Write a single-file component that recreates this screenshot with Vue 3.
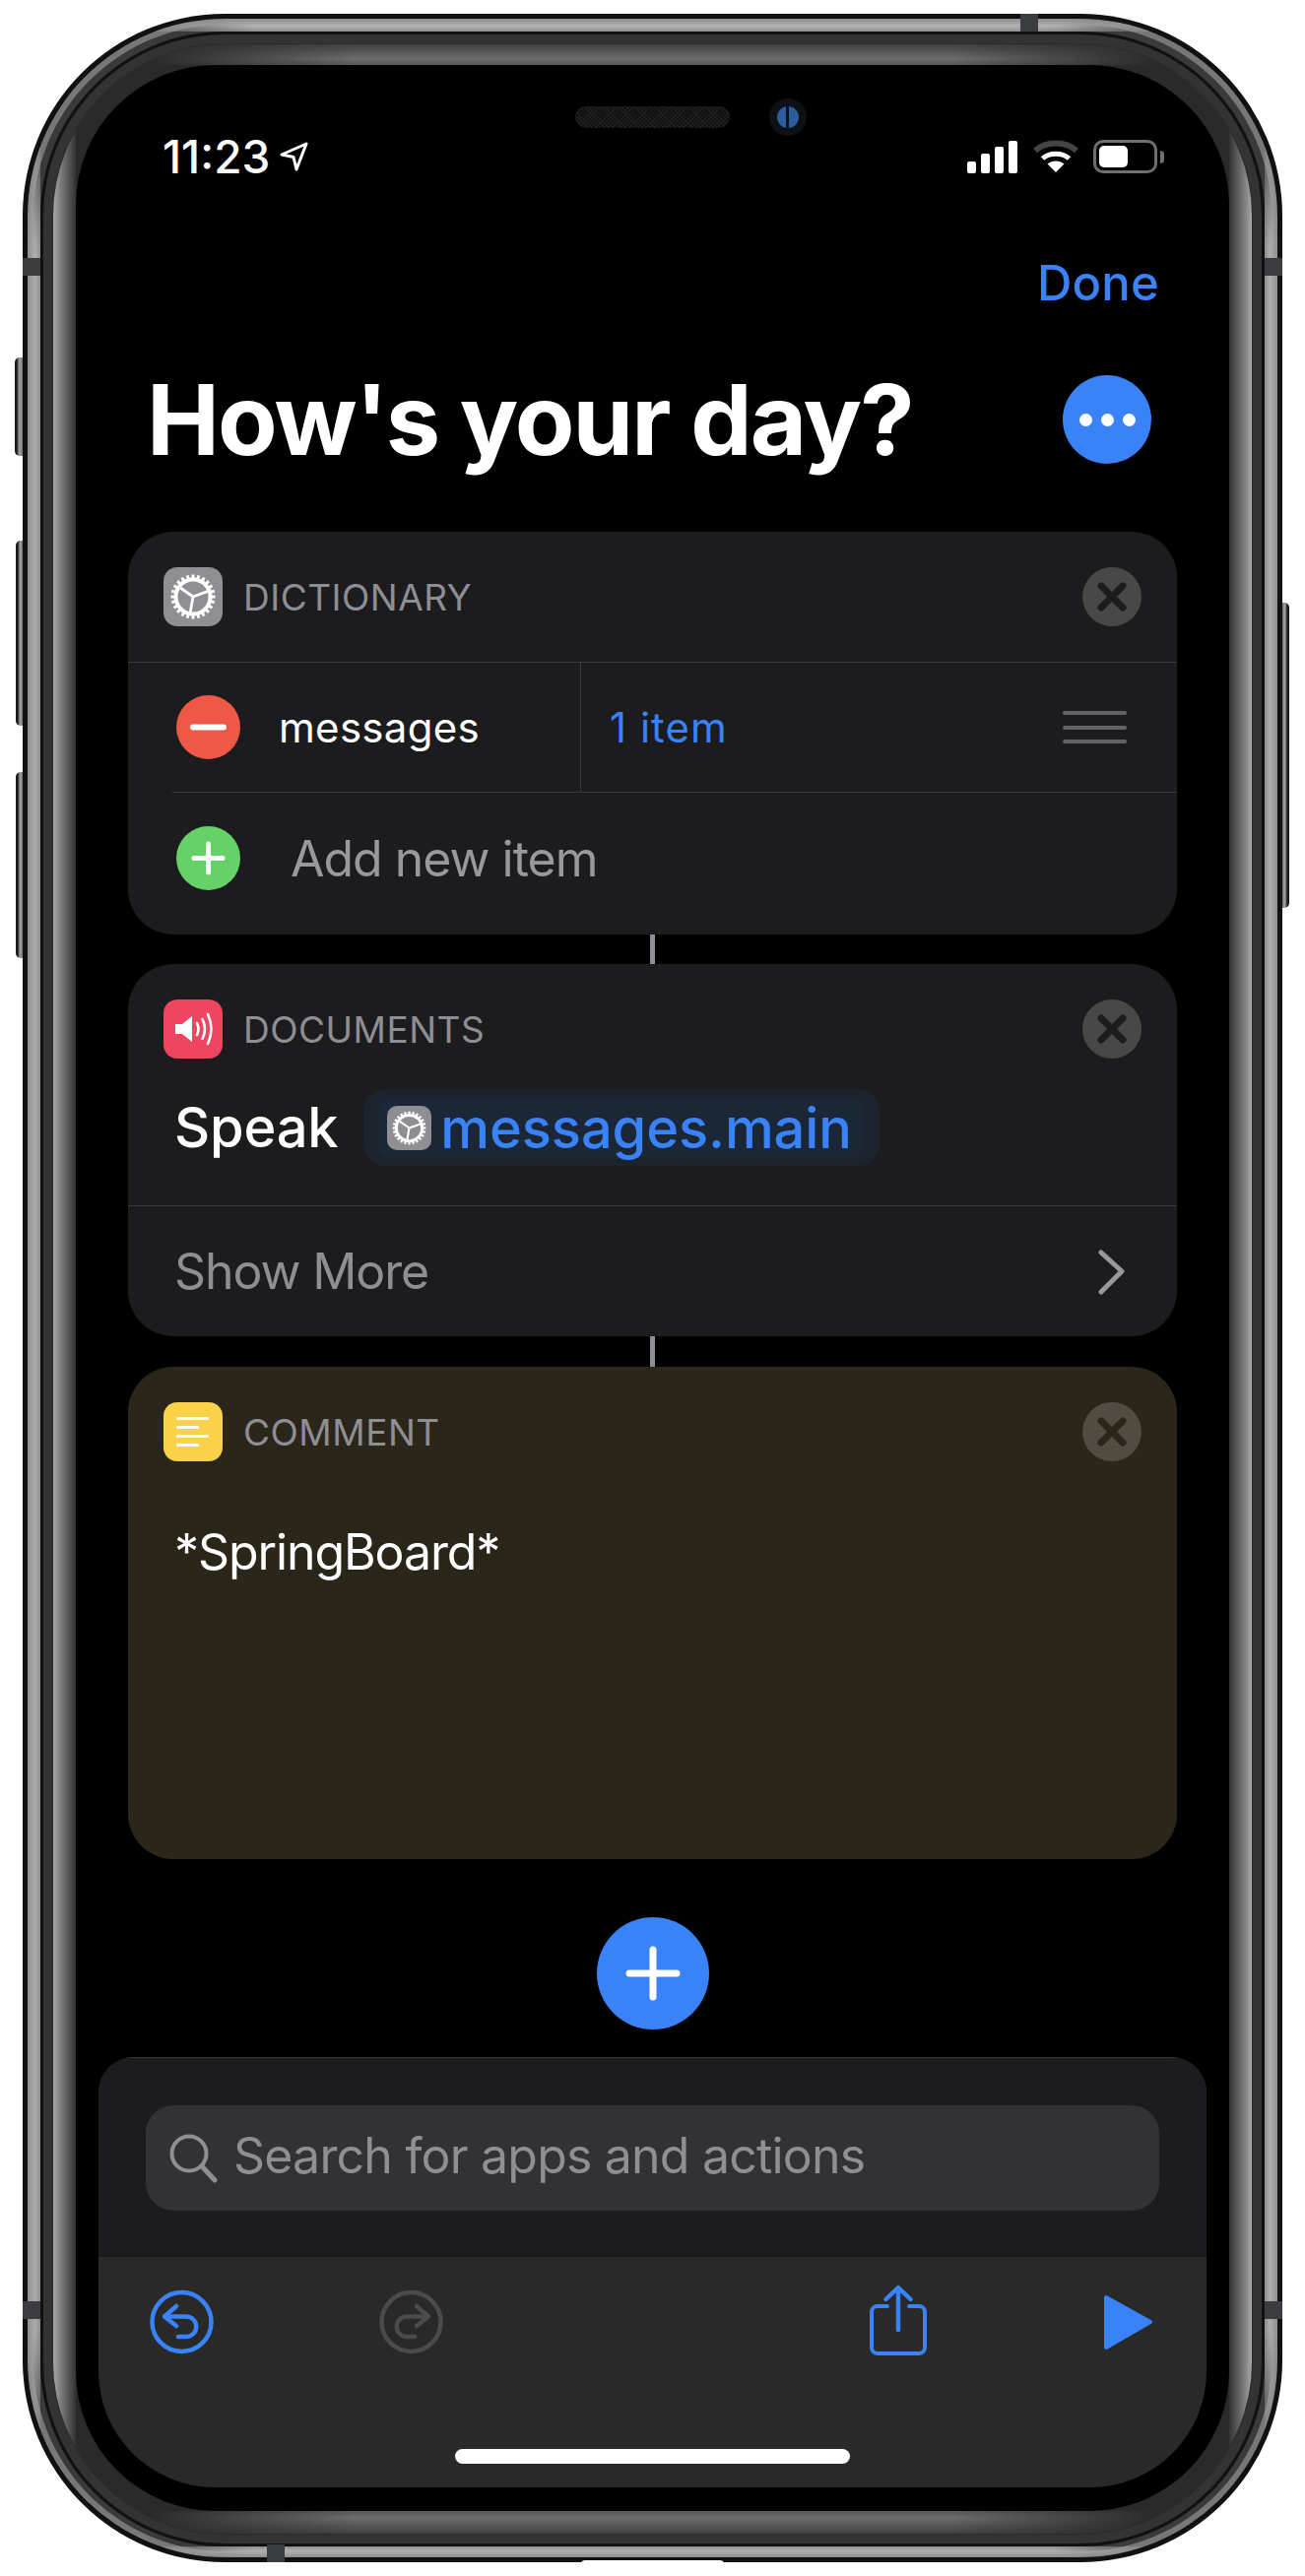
<script setup>
const handleLines = [1, 2, 3]
const commentLines = [33, 23, 33, 23]
const teeth = Array.from({ length: 24 }, (_, i) => i * 15)
const spokes = [70, 190, 305]
</script>

<template>
  <div class="page">
    <div class="device">
      <i class="side-btn silent"></i>
      <i class="side-btn vol-up"></i>
      <i class="side-btn vol-down"></i>
      <i class="side-btn power"></i>
      <i class="port"></i>
      <i class="antenna a-top"></i>
      <i class="antenna a-lt"></i>
      <i class="antenna a-rt"></i>
      <i class="antenna a-lb"></i>
      <i class="antenna a-rb"></i>
      <i class="antenna a-bottom"></i>
      <div class="ring-light">
        <div class="ring-dark">
          <div class="ring-inner">
            <main class="screen">
              <i class="speaker"></i>
              <i class="camera"><b></b></i>

              <div class="status">
                <span class="time">11:23</span>
                <svg class="loc" width="30" height="30" viewBox="0 0 30 30">
                  <path d="M28 2 L3 13 L15 15.5 L18 28 Z" fill="none" stroke="#fff" stroke-width="3" stroke-linejoin="round" />
                </svg>
                <span class="status-space"></span>
                <div class="signal">
                  <i class="b1"></i><i class="b2"></i><i class="b3"></i><i class="b4"></i>
                </div>
                <svg class="wifi" width="46" height="34" viewBox="0 0 46 34">
                  <path d="M2 11 C13 1 33 1 44 11" fill="none" stroke="#444" stroke-width="6" />
                  <path d="M9.5 19 C16 12.5 30 12.5 36.5 19" fill="none" stroke="#fff" stroke-width="5" />
                  <path d="M23 33 L14.5 24.5 C19 20.5 27 20.5 31.5 24.5 Z" fill="#fff" />
                </svg>
                <div class="battery"><i></i></div>
                <i class="nub"></i>
              </div>

              <div class="done-row"><span class="done">Done</span></div>

              <div class="title-row">
                <h1 class="title">How's your day?</h1>
                <div class="more"><i></i><i></i><i></i></div>
              </div>

              <svg class="defs" width="0" height="0">
                <defs>
                  <symbol id="gear" viewBox="0 0 60 60">
                    <circle cx="30" cy="30" r="17.5" fill="none" stroke="#fff" stroke-width="4" />
                    <g stroke="#fff" stroke-width="3">
                      <line v-for="a in teeth" :key="a" x1="30" y1="7.5" x2="30" y2="13" :transform="`rotate(${a} 30 30)`" />
                    </g>
                    <g stroke="#fff" stroke-width="2.8">
                      <line v-for="a in spokes" :key="a" x1="30" y1="30" x2="30" y2="13" :transform="`rotate(${a} 30 30)`" />
                    </g>
                  </symbol>
                </defs>
              </svg>

              <section class="card dict">
                <header class="card-head with-line">
                  <span class="app-icon gray"><svg width="60" height="60"><use href="#gear" /></svg></span>
                  <span class="label">DICTIONARY</span>
                  <svg class="close" width="60" height="60" viewBox="0 0 60 60">
                    <circle cx="30" cy="30" r="30" fill="#484848" />
                    <path d="M19 19 L41 41 M41 19 L19 41" stroke="#1c1c1e" stroke-width="7" stroke-linecap="round" />
                  </svg>
                </header>
                <div class="row-item">
                  <div class="key-cell">
                    <svg class="round" width="65" height="65" viewBox="0 0 65 65">
                      <circle cx="32.5" cy="32.5" r="32.5" fill="#ef5747" />
                      <path d="M17 32.5 H48" stroke="#fff" stroke-width="6" stroke-linecap="round" />
                    </svg>
                    <span class="key">messages</span>
                  </div>
                  <div class="value-cell">
                    <span class="value">1 item</span>
                    <div class="handle"><i v-for="n in handleLines" :key="n"></i></div>
                  </div>
                </div>
                <div class="row-add">
                  <svg class="round" width="65" height="65" viewBox="0 0 65 65">
                    <circle cx="32.5" cy="32.5" r="32.5" fill="#65d168" />
                    <path d="M18 32.5 H47 M32.5 18 V47" stroke="#fff" stroke-width="5" stroke-linecap="round" />
                  </svg>
                  <span class="add-text">Add new item</span>
                </div>
              </section>

              <i class="link l30"></i>

              <section class="card docs">
                <header class="card-head">
                  <span class="app-icon red">
                    <svg width="60" height="60" viewBox="0 0 60 60">
                      <path d="M12 25 H19 L29 17 V43 L19 35 H12 Z" fill="#fff" />
                      <path d="M34 24 Q37 30 34 36 M39.5 20 Q44.5 30 39.5 40 M45 15 Q52 30 45 45" fill="none" stroke="#fff" stroke-width="2.6" stroke-linecap="round" />
                    </svg>
                  </span>
                  <span class="label">DOCUMENTS</span>
                  <svg class="close" width="60" height="60" viewBox="0 0 60 60">
                    <circle cx="30" cy="30" r="30" fill="#484848" />
                    <path d="M19 19 L41 41 M41 19 L19 41" stroke="#1c1c1e" stroke-width="7" stroke-linecap="round" />
                  </svg>
                </header>
                <div class="speak-row">
                  <span class="speak">Speak</span>
                  <div class="token-outer">
                    <div class="token">
                      <span class="token-icon"><svg width="45" height="45"><use href="#gear" /></svg></span>
                      <span class="token-text">messages.main</span>
                    </div>
                  </div>
                </div>
                <div class="show-more">
                  <span class="show-text">Show More</span>
                  <svg width="30" height="50" viewBox="0 0 30 50">
                    <path d="M4 6 L25 25 L4 46" fill="none" stroke="#98989d" stroke-width="5" stroke-linecap="round" stroke-linejoin="round" />
                  </svg>
                </div>
              </section>

              <i class="link l31"></i>

              <section class="card comment">
                <header class="card-head">
                  <span class="app-icon yellow">
                    <i v-for="(w, n) in commentLines" :key="n" class="cline" :style="{ width: w + 'px' }"></i>
                  </span>
                  <span class="label">COMMENT</span>
                  <svg class="close" width="60" height="60" viewBox="0 0 60 60">
                    <circle cx="30" cy="30" r="30" fill="#514c42" />
                    <path d="M19 19 L41 41 M41 19 L19 41" stroke="#2b2619" stroke-width="7" stroke-linecap="round" />
                  </svg>
                </header>
                <p class="comment-text">*SpringBoard*</p>
              </section>

              <div class="add-btn">
                <svg width="114" height="114" viewBox="0 0 114 114">
                  <circle cx="57" cy="57" r="57" fill="#3a82f7" />
                  <path d="M33 57 H81 M57 33 V81" stroke="#fff" stroke-width="7" stroke-linecap="round" />
                </svg>
              </div>

              <div class="sheet">
                <div class="sheet-top">
                  <div class="search">
                    <svg width="50" height="50" viewBox="0 0 50 50">
                      <circle cx="20" cy="20" r="17.5" fill="none" stroke="#8e8e93" stroke-width="4" />
                      <path d="M33 33 L46 47" stroke="#8e8e93" stroke-width="5" stroke-linecap="round" />
                    </svg>
                    <span class="search-text">Search for apps and actions</span>
                  </div>
                </div>
                <div class="sheet-bottom">
                  <div class="tools">
                    <svg class="tool" width="65" height="72" viewBox="0 0 65 72">
                      <circle cx="32.5" cy="38" r="30" fill="none" stroke="#3a82f7" stroke-width="4.5" />
                      <path d="M27 22 L15 32.5 L27 42 M15 32.5 H37 a10.2 10.2 0 0 1 0 20.5 H29" fill="none" stroke="#3a82f7" stroke-width="4.5" stroke-linecap="round" stroke-linejoin="round" />
                    </svg>
                    <svg class="tool redo" width="65" height="72" viewBox="0 0 65 72">
                      <circle cx="32.5" cy="38" r="30" fill="none" stroke="#4b4b4d" stroke-width="4.5" />
                      <path d="M38 22 L50 32.5 L38 42 M50 32.5 H28 a10.2 10.2 0 0 0 0 20.5 H36" fill="none" stroke="#4b4b4d" stroke-width="4.5" stroke-linecap="round" stroke-linejoin="round" />
                    </svg>
                    <span class="tools-space"></span>
                    <svg class="tool" width="58" height="72" viewBox="0 0 58 72">
                      <path d="M18 22 H8 a6 6 0 0 0 -6 6 V64 a6 6 0 0 0 6 6 H50 a6 6 0 0 0 6 -6 V28 a6 6 0 0 0 -6 -6 H40" fill="none" stroke="#3a82f7" stroke-width="4" stroke-linecap="round" />
                      <path d="M29 3 V46 M16.5 15 L29 3 L41.5 15" fill="none" stroke="#3a82f7" stroke-width="4.5" stroke-linecap="round" stroke-linejoin="round" />
                    </svg>
                    <svg class="tool play" width="50" height="72" viewBox="0 0 50 72">
                      <path d="M2 13 L47 38 L2 64 Z" fill="#3a82f7" stroke="#3a82f7" stroke-width="4" stroke-linejoin="round" />
                    </svg>
                  </div>
                  <i class="home"></i>
                </div>
              </div>
            </main>
          </div>
        </div>
      </div>
    </div>
  </div>
</template>

<style>
html, body { background: #fff; margin: 0; }
</style>

<style scoped>
* { box-sizing: border-box; }
i { display: block; font-style: normal; }

.page {
  width: 1325px;
  height: 2616px;
  padding: 14px 23px;
  background: #fff;
  font-family: Inter, "Liberation Sans", sans-serif;
  overflow: hidden;
}
.device {
  position: relative;
  width: 1279px;
  height: 2588px;
  padding: 5px;
  border-radius: 205px;
  background: #111;
}
.ring-light {
  height: 100%;
  padding: 13px 13px 11px;
  border-radius: 200px;
  background-color: #3a3a3a;
  background-repeat: no-repeat;
  background-image:
    linear-gradient(90deg, #3a3a3a 6%, rgba(58,58,58,0) 18%, rgba(58,58,58,0) 82%, #3a3a3a 94%),
    linear-gradient(180deg, #6f6f6f, #b4b4b4 55%, #8e8e8e),
    linear-gradient(90deg, #3a3a3a 6%, rgba(58,58,58,0) 18%, rgba(58,58,58,0) 82%, #3a3a3a 94%),
    linear-gradient(0deg, #6f6f6f, #b4b4b4 55%, #8e8e8e),
    linear-gradient(180deg, #3a3a3a 3%, rgba(58,58,58,0) 9%, rgba(58,58,58,0) 91%, #3a3a3a 97%),
    linear-gradient(90deg, #6f6f6f, #b0b0b0 55%, #8e8e8e),
    linear-gradient(180deg, #3a3a3a 3%, rgba(58,58,58,0) 9%, rgba(58,58,58,0) 91%, #3a3a3a 97%),
    linear-gradient(270deg, #6f6f6f, #b0b0b0 55%, #8e8e8e);
  background-size: 100% 13px, 100% 13px, 100% 11px, 100% 11px, 13px 100%, 13px 100%, 13px 100%, 13px 100%;
  background-position: top, top, bottom, bottom, left, left, right, right;
  box-shadow: inset 0 0 0 6px rgba(170,170,170,0.55);
}
.ring-dark {
  height: 100%;
  padding: 13px;
  border-radius: 187px;
  background: #2b2b2c;
  box-shadow: inset 0 0 0 3px #111, inset 0 0 0 12px #333;
}
.ring-inner {
  height: 100%;
  padding: 21px 23px 23px;
  border-radius: 174px;
  background-color: #2a2a2a;
  background-repeat: no-repeat;
  background-image:
    linear-gradient(90deg, #2a2a2a 8%, rgba(42,42,42,0) 25%, rgba(42,42,42,0) 75%, #2a2a2a 92%),
    linear-gradient(180deg, #414141, #6c6c6c 70%, #585858),
    linear-gradient(90deg, #2a2a2a 8%, rgba(42,42,42,0) 25%, rgba(42,42,42,0) 75%, #2a2a2a 92%),
    linear-gradient(0deg, #414141, #6c6c6c 70%, #585858),
    linear-gradient(90deg, #a9a9a9, #7a7a7a 35%, #333 100%),
    linear-gradient(270deg, #a9a9a9, #7a7a7a 35%, #333 100%);
  background-size: 100% 21px, 100% 21px, 100% 23px, 100% 23px, 23px 100%, 23px 100%;
  background-position: top, top, bottom, bottom, left, right;
}
.screen {
  position: relative;
  height: 100%;
  padding-top: 60px;
  border-radius: 142px;
  background: #000;
  display: flex;
  flex-direction: column;
  overflow: hidden;
}

.antenna { position: absolute; background: #3a3c40; z-index: 2; }
.a-top { left: 1013px; top: 0; width: 18px; height: 18px; }
.a-bottom { left: 248px; bottom: 0; width: 18px; height: 18px; }
.a-lt { left: 0; top: 248px; width: 18px; height: 18px; }
.a-rt { right: 0; top: 248px; width: 18px; height: 18px; }
.a-lb { left: 0; top: 2323px; width: 18px; height: 18px; }
.a-rb { right: 0; top: 2323px; width: 18px; height: 18px; }

.side-btn {
  position: absolute;
  border-radius: 5px 0 0 5px;
  background: linear-gradient(90deg, #1a1a1a 0 2px, #555 3px, #a3a3a3 60%, #777 100%);
}
.silent { left: -8px; top: 349px; width: 8px; height: 100px; }
.vol-up { left: -7px; top: 535px; width: 7px; height: 188px; }
.vol-down { left: -7px; top: 770px; width: 7px; height: 189px; }
.power { right: -7px; top: 598px; width: 7px; height: 310px; transform: scaleX(-1); }
.port {
  position: absolute;
  left: 567px;
  bottom: -2px;
  width: 145px;
  height: 4px;
  background: #fff;
  border-radius: 6px 6px 0 0;
  z-index: 3;
}

.speaker {
  position: absolute;
  left: 507px;
  top: 42px;
  width: 157px;
  height: 22px;
  border-radius: 11px;
  background-color: #0f0f0f;
  background-image:
    repeating-linear-gradient(45deg, #1f1f1f 0 1px, transparent 1px 3px),
    repeating-linear-gradient(-45deg, #1f1f1f 0 1px, transparent 1px 3px);
}
.camera {
  position: absolute;
  left: 704px;
  top: 34px;
  width: 38px;
  height: 38px;
  border-radius: 50%;
  background: #0d1014;
  display: flex;
  align-items: center;
  justify-content: center;
}
.camera b {
  display: block;
  width: 22px;
  height: 22px;
  border-radius: 50%;
  background: linear-gradient(90deg, #2a5d9c 0 42%, #0b1118 42% 56%, #2a5d9c 56%);
}

.status {
  display: flex;
  align-items: center;
  height: 66px;
  padding: 0 66px 0 88px;
  color: #fff;
}
.time {
  font-size: 46px;
  font-weight: 500;
  line-height: 66px;
}
.loc { margin-left: 9px; }
.status-space { flex: 1; }
.signal { display: flex; align-items: flex-end; gap: 5px; height: 33px; }
.signal i { width: 9px; border-radius: 2px; background: #fff; }
.b1 { height: 12px; }
.b2 { height: 20px; }
.b3 { height: 27px; }
.b4 { height: 33px; }
.wifi { margin-left: 16px; }
.battery {
  margin-left: 15px;
  width: 65px;
  height: 34px;
  padding: 3px;
  border: 3px solid #6f6f6f;
  border-radius: 10px;
}
.battery i { width: 29px; height: 22px; border-radius: 5px; background: #fff; }
.nub { width: 4px; height: 13px; margin-left: 3px; border-radius: 0 4px 4px 0; background: #6f6f6f; }

.done-row {
  display: flex;
  justify-content: flex-end;
  height: 60px;
  margin-top: 66px;
  padding-right: 71px;
}
.done {
  color: #3a82f7;
  font-size: 49px;
  font-weight: 500;
  letter-spacing: 0.2px;
  line-height: 60px;
}
.title-row {
  display: flex;
  align-items: center;
  justify-content: space-between;
  height: 90px;
  margin-top: 63px;
  padding: 0 79px 0 72px;
}
.title {
  margin: 0;
  color: #fff;
  font-size: 99px;
  font-weight: 700;
  letter-spacing: -1.9px;
  line-height: 90px;
  white-space: nowrap;
}
.more {
  width: 90px;
  height: 90px;
  border-radius: 50%;
  background: #3a82f7;
  display: flex;
  align-items: center;
  justify-content: center;
  gap: 9px;
}
.more i { width: 13px; height: 13px; border-radius: 50%; background: #fff; }
.defs { position: absolute; }

.card {
  flex: none;
  margin: 0 53px;
  border-radius: 46px;
  background: #1c1c1e;
  overflow: hidden;
}
.dict { margin-top: 69px; height: 409px; }
.docs { height: 378px; }
.comment { height: 500px; background: #2b261a; }
.link { flex: none; width: 5px; margin-left: 583px; background: #8e8e93; }
.l30 { height: 30px; }
.l31 { height: 31px; }

.card-head {
  display: flex;
  align-items: center;
  height: 132px;
  padding: 0 35px 0 36px;
}
.with-line { height: 133px; border-bottom: 1px solid #3a3a3c; }
.app-icon {
  flex: none;
  width: 60px;
  height: 60px;
  border-radius: 14px;
  display: flex;
  flex-direction: column;
  align-items: flex-start;
  justify-content: center;
}
.gray { background: #8e8e93; }
.red { background: #ee4660; }
.yellow { background: #f9d24a; padding-left: 13px; gap: 6px; }
.cline { height: 3px; border-radius: 2px; background: #fff; }
.label {
  flex: 1;
  margin-left: 21px;
  padding-top: 2px;
  color: #8e8e93;
  font-size: 37px;
  letter-spacing: 0.5px;
  line-height: 60px;
  font-weight: 400;
}
.close { flex: none; margin-right: 1px; }

.row-item { display: flex; height: 131px; }
.key-cell {
  display: flex;
  align-items: center;
  width: 460px;
  padding-left: 49px;
  border-right: 1px solid #3a3a3c;
}
.key {
  margin-left: 39px;
  color: #fff;
  font-size: 42px;
  letter-spacing: 0.3px;
}
.value-cell {
  flex: 1;
  display: flex;
  align-items: center;
  justify-content: space-between;
  padding: 0 51px 0 29px;
}
.value { color: #3a82f7; font-size: 42px; letter-spacing: 1px; }
.handle { display: flex; flex-direction: column; gap: 10.5px; width: 65px; }
.handle i { height: 4px; border-radius: 2px; background: #636366; }
.row-add {
  position: relative;
  display: flex;
  align-items: center;
  height: 145px;
  padding: 0 0 10px 49px;
}
.row-add::before {
  content: "";
  position: absolute;
  top: 0;
  left: 45px;
  right: 0;
  height: 1px;
  background: #3a3a3c;
}
.add-text {
  margin-left: 51px;
  color: #98989d;
  font-size: 50px;
  letter-spacing: -1px;
}
.speak-row {
  display: flex;
  align-items: center;
  height: 114px;
  padding-left: 47px;
  border-bottom: 1px solid #3a3a3c;
  padding-bottom: 45px;
}
.speak {
  color: #fff;
  font-size: 56px;
  font-weight: 500;
  letter-spacing: -0.2px;
}
.token-outer {
  margin-left: 26px;
  padding: 8px 16px 7px 15px;
  border-radius: 22px;
  background: #1d232d;
}
.token {
  display: flex;
  align-items: center;
  gap: 9px;
  height: 63px;
  padding: 0 12px 0 9px;
  border-radius: 16px;
  background: #1b2637;
}
.token-icon {
  width: 45px;
  height: 45px;
  border-radius: 10px;
  background: #8e8e93;
  display: flex;
}
.token-text {
  color: #3a82f7;
  font-size: 56px;
  letter-spacing: -0.1px;
  white-space: nowrap;
  font-weight: 500;
}
.show-more {
  display: flex;
  align-items: center;
  justify-content: space-between;
  height: 132px;
  padding: 0 51px 0 47px;
}
.show-text { color: #8e8e93; font-size: 50px; letter-spacing: -1.1px; }
.comment-text {
  margin: 26px 0 0 47px;
  color: #fff;
  font-size: 50px;
  line-height: 60px;
  letter-spacing: -1.1px;
}

.add-btn {
  flex: none;
  height: 114px;
  margin-top: 59px;
  display: flex;
  justify-content: center;
}
.sheet {
  flex: none;
  margin: 28px 23px 24px;
  height: 437px;
  border-radius: 36px 36px 118px 118px;
  overflow: hidden;
  background: #29292a;
}
.sheet-top {
  height: 203px;
  padding: 48px 48px 0;
  background: #1c1c1e;
  border-top: 1px solid #39393b;
}
.search {
  display: flex;
  align-items: center;
  height: 107px;
  padding-left: 24px;
  border-radius: 28px;
  background: #313136;
}
.search-text {
  margin: 0 0 5px 15px;
  color: #8e8e93;
  font-size: 50px;
  letter-spacing: -0.8px;
  white-space: nowrap;
}
.sheet-bottom { height: 234px; }
.tools {
  display: flex;
  height: 100px;
  padding: 28px 54px 0 52px;
}
.redo { margin-left: 168px; }
.tools-space { flex: 1; }
.play { margin-left: 180px; }
.home {
  width: 401px;
  height: 15px;
  margin: 95px auto 0;
  border-radius: 8px;
  background: #fff;
}
</style>
